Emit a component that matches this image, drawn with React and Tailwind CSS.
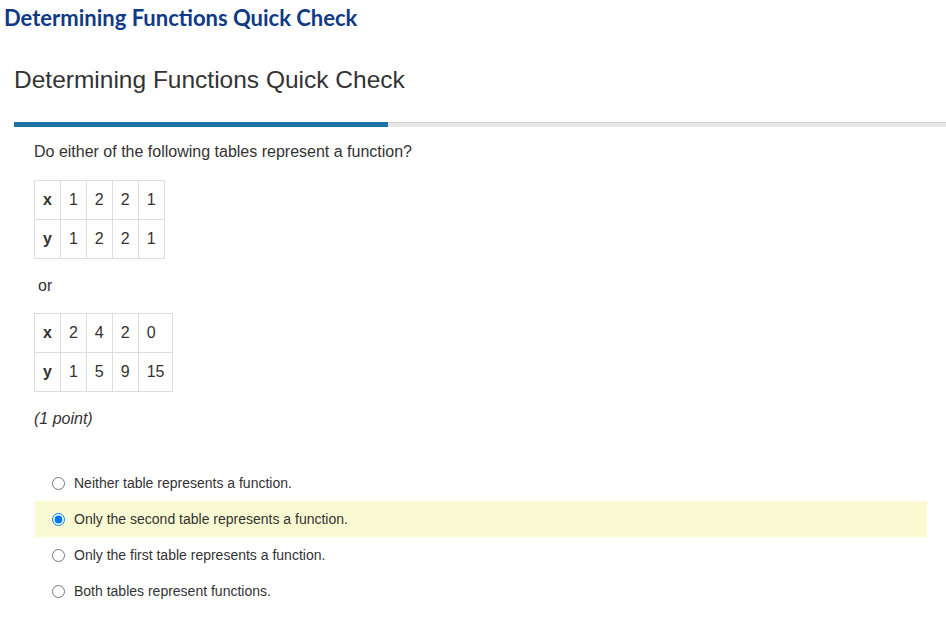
const TABLES = [
  { x: ['1', '2', '2', '1'], y: ['1', '2', '2', '1'] },
  { x: ['2', '4', '2', '0'], y: ['1', '5', '9', '15'] },
];

const OPTIONS = [
  'Neither table represents a function.',
  'Only the second table represents a function.',
  'Only the first table represents a function.',
  'Both tables represent functions.',
];

function ValueTable({ data }) {
  const rows = [['x', data.x], ['y', data.y]];
  return (
    <table className="border-collapse text-[16px] text-[#333]">
      <tbody>
        {rows.map(([label, vals]) => (
          <tr key={label}>
            <td className="h-[39px] border border-[#ddd] px-[8px] font-bold">{label}</td>
            {vals.map((v, i) => (
              <td key={i} className="h-[39px] border border-[#ddd] px-[8px]">{v}</td>
            ))}
          </tr>
        ))}
      </tbody>
    </table>
  );
}

export default function App() {
  const selected = 1;
  return (
    <div className="min-h-[617px] w-[946px] bg-white font-['Liberation_Sans',Arial,sans-serif]">
      <h1 className="pl-[4px] pt-[4px] font-['Lato',sans-serif] text-[22px] font-bold leading-[28px] text-[#0f3a85]">
        Determining Functions Quick Check
      </h1>

      <h2 className="mt-[34px] pl-[14px] text-[24.5px] leading-[28px] text-[#333]">
        Determining Functions Quick Check
      </h2>

      {/* progress */}
      <div className="ml-[14px] mt-[28px] flex h-[5px] border-t border-[#d6d6d6] bg-[#e6e6e6]">
        <div className="-mt-px h-[5px] w-[374px] bg-[#1d72a6]" />
      </div>

      <div className="pl-[34px]">
        <p className="mt-[15px] text-[16px] leading-[20px] text-[#333]">
          Do either of the following tables represent a function?
        </p>

        <div className="mt-[18px]">
          <ValueTable data={TABLES[0]} />
        </div>

        <p className="mt-[17px] pl-[4px] text-[16px] leading-[20px] text-[#333]">or</p>

        <div className="mt-[17px]">
          <ValueTable data={TABLES[1]} />
        </div>

        <p className="mt-[17px] text-[16px] italic leading-[20px] text-[#333]">(1 point)</p>
      </div>

      <div className="ml-[35px] mr-[19px] mt-[36px] flex flex-col">
        {OPTIONS.map((opt, i) => (
          <label
            key={i}
            className={`flex h-[36px] items-center gap-[9px] pl-[17px] text-[14px] text-[#333] ${i === selected ? 'bg-[#fafad2]' : ''}`}
          >
            <input type="radio" name="q" checked={i === selected} readOnly className="m-0 h-[13px] w-[13px]" />
            <span>{opt}</span>
          </label>
        ))}
      </div>
    </div>
  );
}
